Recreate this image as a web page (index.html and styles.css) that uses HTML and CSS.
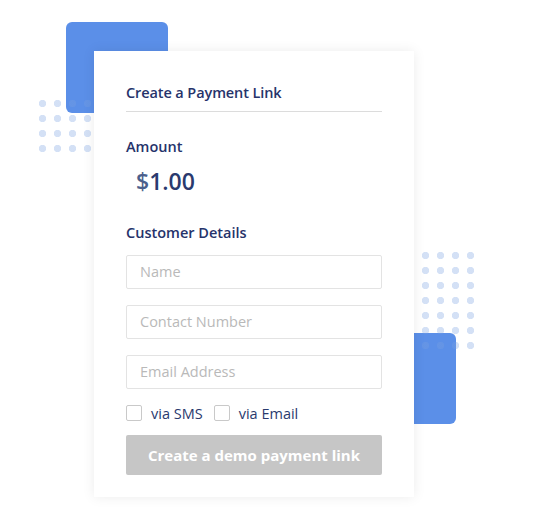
FILE: index.html
```html
<!DOCTYPE html>
<html>
<head>
<meta charset="utf-8">
<link rel="stylesheet" href="styles.css">
</head>
<body>
<div class="stage">
  <div class="deco rect-tl"></div>
  <div class="deco rect-br"></div>
  <div class="card">
    <h1 class="title">Create a Payment Link</h1>
    <div class="section-label amount-label">Amount</div>
    <div class="amount"><span class="cur">$</span>1.00</div>
    <div class="section-label cust-label">Customer Details</div>
    <div class="fields">
      <div class="field">Name</div>
      <div class="field">Contact Number</div>
      <div class="field">Email Address</div>
    </div>
    <div class="checks">
      <span class="box"></span><span class="check-text">via SMS</span>
      <span class="box"></span><span class="check-text">via Email</span>
    </div>
    <div class="btn">Create a demo payment link</div>
  </div>
  <div class="deco dots dots-l"></div>
  <div class="deco dots dots-r"></div>
</div>
</body>
</html>
```
FILE: styles.css
```css
* { box-sizing: border-box; margin: 0; padding: 0; }
html, body { background: #fff; }
body {
  font-family: "Open Sans", "Noto Sans", sans-serif;
  width: 544px;
  height: 524px;
  overflow: hidden;
}
.stage { position: relative; width: 544px; height: 524px; }
.deco { position: absolute; }
.rect-tl {
  left: 66px; top: 22px; width: 102px; height: 91px;
  background: #5b8fe8; border-radius: 6px;
}
.rect-br {
  left: 380px; top: 333px; width: 76px; height: 91px;
  background: #5b8fe8; border-radius: 6px;
}
.dots {
  background-image: radial-gradient(circle, rgba(120,160,225,0.32) 3.4px, transparent 3.9px);
  background-size: 15px 15px;
  pointer-events: none;
}
.dots-l { left: 35px; top: 96px; width: 60px; height: 60px; }
.dots-r { left: 418px; top: 248px; width: 60px; height: 105px; }
.card {
  position: absolute;
  left: 94px; top: 51px; width: 320px; height: 446px;
  background: #fff;
  box-shadow: 0 0 12px rgba(0,0,0,0.08);
  padding: 32px 32px 0 32px;
  z-index: 1;
}
.title {
  font-size: 14.5px; font-weight: 600; color: #26336b;
  height: 29px; line-height: 20px;
  border-bottom: 1px solid #dcdcdc;
  letter-spacing: -0.1px;
}
.section-label { font-size: 14.5px; font-weight: 600; color: #26336b; line-height: 20px; }
.amount-label { margin-top: 25px; }
.amount {
  margin-top: 9px; margin-left: 10px;
  font-size: 23px; font-weight: 600; color: #2a3a6e; line-height: 30px;
}
.cur { color: #4b5f8c; }
.cust-label { margin-top: 27px; }
.fields { margin-top: 12px; display: flex; flex-direction: column; gap: 16px; }
.field {
  height: 34px; border: 1px solid #e3e3e3; border-radius: 2px;
  padding-left: 13px; line-height: 32px;
  font-size: 14.5px; color: #b9b9b9;
}
.checks {
  margin-top: 15px; display: flex; align-items: center; height: 18px;
  font-size: 14.5px; color: #2a3a6e;
}
.box {
  width: 16px; height: 16px; border: 1px solid #c9c9c9; border-radius: 2px;
  background: #fff;
}
.check-text { margin-left: 9px; margin-right: 11px; }
.btn {
  margin-top: 13px; height: 40px; background: #c6c6c6; border-radius: 2px;
  color: #fff; font-size: 15px; font-weight: 700; text-align: center; line-height: 40px;
}
```
